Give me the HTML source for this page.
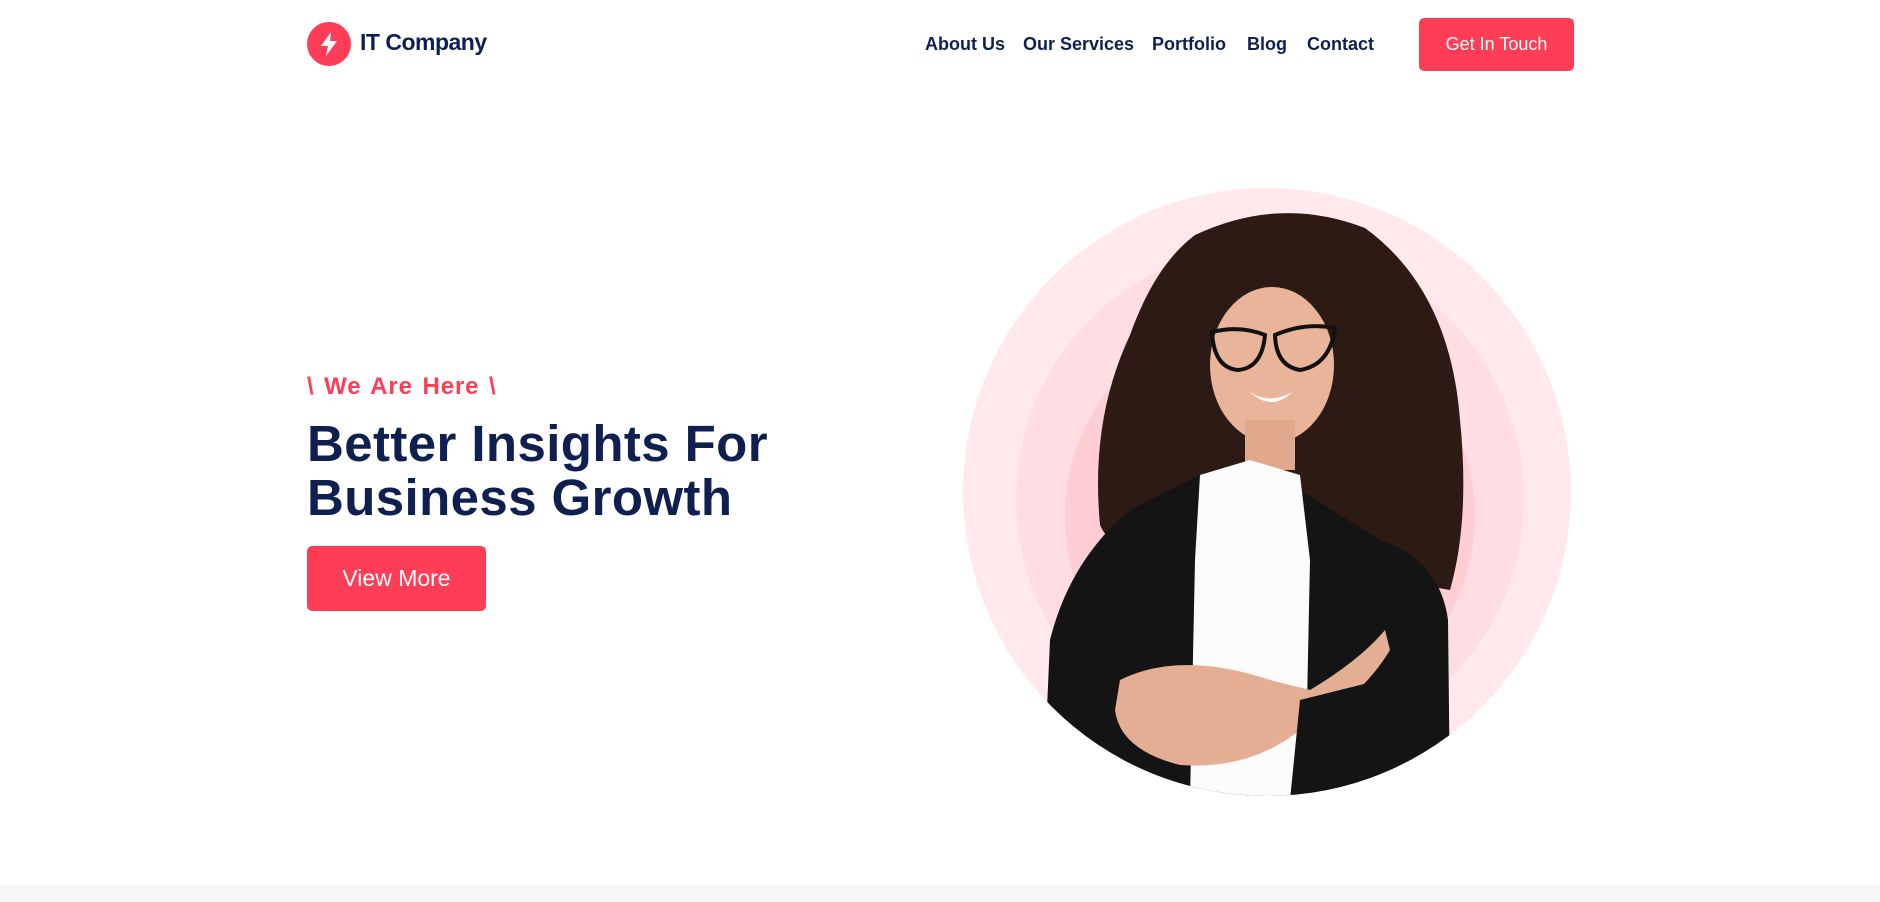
<!DOCTYPE html>
<html><head><meta charset="utf-8"><style>
*{margin:0;padding:0;box-sizing:border-box}
body{width:1880px;height:902px;background:#fff;font-family:"Liberation Sans",sans-serif;position:relative;overflow:hidden;color:#0f1f4f}
.logo{position:absolute;left:307px;top:22px;width:44px;height:44px;border-radius:50%;background:#ff3d56}
.brand{position:absolute;left:360px;top:29px;font-size:23px;font-weight:bold;color:#0f1f4f;letter-spacing:-0.5px}
.nav{position:absolute;top:34px;font-size:18px;color:#0f1f4f;font-weight:600}
.btn{position:absolute;background:#ff3d56;color:#fff;border-radius:5px;display:flex;align-items:center;justify-content:center}
.tag{position:absolute;left:307px;top:373px;font-size:24px;color:#ff3d56;font-weight:600;word-spacing:2px;letter-spacing:0.9px}
h1{position:absolute;left:307px;top:417px;font-size:51px;line-height:54px;font-weight:bold;color:#0f1f4f;letter-spacing:0.4px}
.foot{position:absolute;left:0;top:885px;width:1880px;height:17px;background:#f6f6f6}
</style></head><body>
<div class="logo"><svg width="44" height="44" viewBox="0 0 44 44"><path d="M24 10 L14 24 L21 24 L19 34 L30 19 L23 19 Z" fill="#fff"/></svg></div>
<div class="brand">IT Company</div>
<div class="nav" style="left:925px">About Us</div>
<div class="nav" style="left:1023px">Our Services</div>
<div class="nav" style="left:1152px">Portfolio</div>
<div class="nav" style="left:1247px">Blog</div>
<div class="nav" style="left:1307px">Contact</div>
<div class="btn" style="left:1419px;top:18px;width:155px;height:53px;font-size:18px">Get In Touch</div>
<div class="tag">\ We Are Here \</div>
<h1>Better Insights For<br>Business Growth</h1>
<div class="btn" style="left:307px;top:546px;width:179px;height:65px;font-size:23px">View More</div>
<svg style="position:absolute;left:0;top:0" width="1880" height="902">
<defs><clipPath id="c"><circle cx="1267" cy="492" r="304"/></clipPath></defs>
<circle cx="1267" cy="492" r="304" fill="#ffe9ec"/>
<circle cx="1270" cy="499" r="254" fill="#ffdde2"/>
<circle cx="1270" cy="516" r="205" fill="#ffcdd4"/>
<g clip-path="url(#c)">
<path d="M1195 235 Q1280 195 1365 228 Q1450 290 1460 420 Q1470 520 1450 590 L1330 570 L1200 530 Q1120 570 1100 525 Q1090 420 1130 335 Q1155 265 1195 235Z" fill="#2e1a14"/>
<ellipse cx="1272" cy="365" rx="62" ry="78" fill="#e8b59b"/>
<rect x="1245" y="420" width="50" height="50" fill="#e0a98e"/>
<path d="M1043 800 L1050 640 Q1070 560 1130 510 L1200 475 L1300 490 L1380 540 Q1440 560 1448 620 L1450 800Z" fill="#141414"/>
<path d="M1200 475 L1250 460 L1300 475 L1310 560 L1305 800 L1190 800 L1195 560Z" fill="#fbfbfb"/>
<path d="M1120 680 Q1180 650 1270 680 L1310 690 Q1360 660 1385 630 L1390 650 Q1360 700 1300 730 Q1250 770 1180 765 Q1120 750 1115 710Z" fill="#e3ae94"/>
<path d="M1300 700 L1380 680 L1380 800 L1290 800Z" fill="#141414"/>
<g fill="none" stroke="#111" stroke-width="4"><path d="M1212 332 Q1240 325 1265 335 Q1262 368 1238 370 Q1214 368 1212 332Z"/><path d="M1275 335 Q1305 322 1335 328 Q1330 365 1300 370 Q1276 366 1275 335Z"/></g>
<path d="M1250 392 Q1270 405 1292 392 Q1272 412 1250 392Z" fill="#fff"/>
</g>
</svg>
<div class="foot"></div>
</body></html>
